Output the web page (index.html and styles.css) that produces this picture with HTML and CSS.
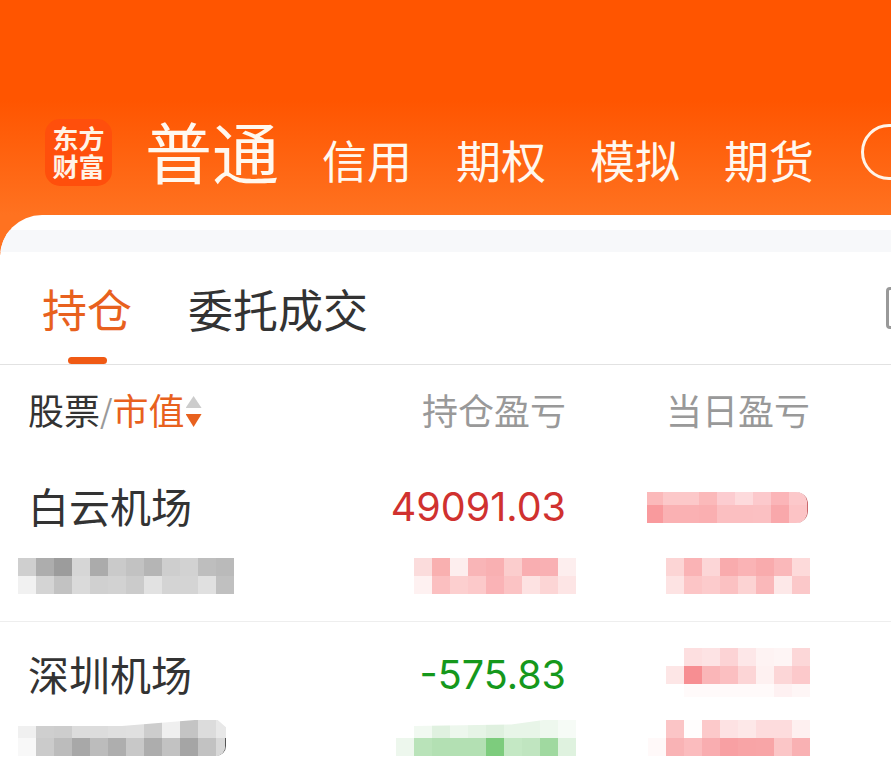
FILE: index.html
```html
<!DOCTYPE html>
<html lang="zh-CN">
<head>
    <meta charset="UTF-8">
    <title>东方财富 持仓</title>
    <link rel="stylesheet" href="styles.css">
</head>
<body>
    <div class="page">
        <header class="top">
            <div class="logo"><span class="logo-text">东方财富</span></div>
            <nav class="accounts">
                <span class="account account-on">普通</span>
                <span class="account">信用</span>
                <span class="account">期权</span>
                <span class="account">模拟</span>
                <span class="account">期货</span>
            </nav>
            <div class="circle-btn"></div>
        </header>

        <main class="card">
            <div class="strip"></div>

            <div class="tabs">
                <div class="tab tab-on">持仓</div>
                <div class="tab">委托成交</div>
                <div class="tab-icon"></div>
            </div>

            <div class="row head">
                <div class="head-name">
                    <span>股票</span><span class="slash">/</span><span class="sorted">市值</span>
                    <span class="sort"><i class="sort-up"></i><i class="sort-down"></i></span>
                </div>
                <div class="head-col col-mid">持仓盈亏</div>
                <div class="head-col">当日盈亏</div>
            </div>

            <div class="row stock first">
                <div class="name">白云机场</div>
                <div class="num red">49091.03</div>
                <div class="mosaic end-round" data-lines="13:fbb9ba fcc8c9 fcc8c9 fbb9ba fcccd0 fddadc fcc9cc fbb5b8 fcc8ca|18:f99a9d fab1b3 fab1b3 faafb1 fbbfc1 fbbfc1 fbc0c2 f9a8ab fcc3c5"></div>
                <div class="mosaic left" data-lines="18:cfcfcf adadad 9c9c9c d6d6d6 ababab cacaca c2c2c2 b5b5b5 cecece d2d2d2 bebebe bababa|18:f1f1f1 d4d4d4 c2c2c2 dadada d0d0d0 d2d2d2 cbcbcb e2e2e2 d4d4d4 d4d4d4 e0e0e0 c0c0c0"></div>
                <div class="mosaic" data-lines="18:fbdcdc f9b0b0 fdeeee f9b5b7 f9b0b2 fbcdcd f9aeb1 f9b0b3 fdeeee|18:fef1f1 fbbfc0 fccfcf fcc9ca fab3b6 fbc3c4 fde2e2 fcd5d5 fde5e5"></div>
                <div class="mosaic" data-lines="18:fcd5d5 fab3b5 fcd6d7 f9abad fab3b5 f9abad fab8ba fddada|18:fde3e3 fcc5c6 fccbcc fbc1c2 fcd3d3 fab8ba fde8e8 fbc8c9"></div>
            </div>

            <div class="row stock second">
                <div class="name name-tight">深圳机场</div>
                <div class="num green">-575.83</div>
                <div class="mosaic lift" data-lines="18:fddfe0 fde3e4 fcd3d5 fde7e8 fef3f3 fef5f5 fcd7d8|18:fde6e6 f78e92 fab6b8 fbbfc1 fcd5d6 fef1f1 fcd6d7 fcc9cb|13:fffafa fffafa fffafa fffafa fffafa fef1f2 fef6f6"></div>
                <div class="mosaic left short" data-lines="18:f0f0f0 cfcfcf cdcdcd dcdcdc dcdcdc dfdfdf e0e0e0 cdcdcd efefef c4c4c4 dcdcdc e8e8e8|18:f8f8f8 cbcbcb bcbcbc a8a8a8 bcbcbc aeaeae c8c8c8 adadad c2c2c2 a5a5a5 c2c2c2 d8d8d8"></div>
                <div class="mosaic rise" data-lines="18:f1f9f1 e0f1e0 edf7ed e6f4e6 dff0df e8f5e8 e8f5e8 eef8ee f6fbf6|18:edf7ed b9e3b9 b3e0b3 b3e0b3 b3e0b3 7dcc7d c4e8c4 c0e5c0 a0d9a0 dff2df"></div>
                <div class="mosaic" data-lines="18:fbc5c6 fffdfd fcc9ca fde2e3 fde8e8 fddcdd fddcdd fef0f0|18:fff9f9 f9b3b5 fbbcbe f9adb0 f8a0a3 f8a4a6 f8a5a7 fbc6c7 f9b1b3"></div>
            </div>
        </main>
    </div>
    <script src="script.js"></script>
</body>
</html>
```

FILE: styles.css
```css
* {
    box-sizing: border-box;
}

html, body {
    margin: 0;
    height: 100%;
    overflow: hidden;
    background: #fff;
}

body {
    font-family: "Noto Sans CJK SC", "Noto Sans", sans-serif;
    color: #333;
}

.page {
    width: 891px;
    height: 784px;
    overflow: hidden;
}

.top {
    position: relative;
    height: 257px;
    padding: 119px 0 0 45px;
    display: flex;
    align-items: flex-start;
    overflow: hidden;
    background: linear-gradient(#ff5500 0, #ff5500 100px, #ff7220 215px);
}

.logo {
    width: 67px;
    height: 67px;
    flex: none;
    padding-top: 5px;
    border-radius: 15px;
    background: #ff4f0c;
    color: #fff3e6;
    font-size: 26px;
    font-weight: 700;
    line-height: 28px;
    text-align: center;
}

.logo-text {
    display: block;
    width: 52px;
    margin: 0 auto;
}

.accounts {
    display: flex;
    align-items: baseline;
    gap: 44px;
    margin: -17px 0 0 33px;
    color: #fff8ef;
    font-size: 45px;
    line-height: 96px;
}

.account-on {
    margin-right: -1px;
    font-size: 67px;
}

.circle-btn {
    position: absolute;
    left: 861px;
    top: 124px;
    width: 56px;
    height: 56px;
    border: 3px solid #fff4e8;
    border-radius: 50%;
}

.card {
    margin-top: -42px;
    height: 569px;
    position: relative;
    background: #fff;
    border-radius: 42px 0 0 0;
    overflow: hidden;
    padding-top: 15px;
}

.strip {
    height: 22px;
    background: #f7f8fa;
}

.tabs {
    position: relative;
    height: 113px;
    padding: 27px 0 0 42px;
    display: flex;
    gap: 56px;
    border-bottom: 1px solid #e2e2e2;
}

.tab {
    font-size: 45px;
    line-height: 60px;
    color: #333;
}

.tab-on {
    position: relative;
    color: #e8611e;
}

.tab-on::after {
    content: "";
    position: absolute;
    left: 26px;
    top: 78px;
    width: 39px;
    height: 7px;
    border-radius: 4px;
    background: #f05a14;
}

.tab-icon {
    position: absolute;
    left: 886px;
    top: 35px;
    width: 30px;
    height: 42px;
    border: 3px solid #999;
    border-radius: 4px;
}

.row {
    display: grid;
    grid-template-columns: 240px 336px 234px;
}

.head {
    height: 100px;
    padding-top: 19px;
    font-size: 36px;
    line-height: 50px;
}

.head-name {
    padding-left: 28px;
    display: flex;
    white-space: nowrap;
}

.slash {
    font-size: 32px;
    color: #999;
}

.sorted {
    color: #e8611e;
}

.sort {
    display: flex;
    flex-direction: column;
    gap: 6px;
    margin: 12px 0 0 1px;
}

.sort i {
    width: 16px;
    height: 12px;
    clip-path: polygon(50% 0, 100% 100%, 0 100%);
    background: #ccc;
}

.sort .sort-down {
    height: 13px;
    clip-path: polygon(0 0, 100% 0, 50% 100%);
    background: #e8611e;
}

.head-col {
    color: #999;
    text-align: right;
}

.col-mid {
    padding-right: 10px;
}

.stock {
    grid-template-rows: 84px auto;
    align-items: center;
}

.first {
    height: 157px;
    border-bottom: 1px solid #eee;
}

.second {
    padding-top: 11px;
}

.name {
    padding: 0 0 5px 28px;
    font-size: 41px;
    color: #333;
}

.name-tight {
    padding-left: 28px;
}

.num {
    padding-right: 10px;
    font-family: Inter, "Noto Sans", sans-serif;
    font-size: 39.5px;
    text-align: right;
}

.red {
    color: #d0312f;
}

.green {
    color: #15981c;
}

.mosaic {
    display: flex;
    flex-direction: column;
    align-items: flex-end;
}

.mosaic.left {
    align-items: flex-start;
    margin-left: 18px;
}

.first .mosaic:nth-child(n+4) {
    margin-top: 9px;
    align-self: start;
}

.second .mosaic:nth-child(n+4) {
    margin-top: 3px;
    align-self: start;
}

.line {
    display: flex;
}

.tile {
    display: block;
    width: 18px;
    flex: none;
}

.end-round {
    margin-right: 2px;
}

.end-round .tile:first-child {
    width: 16px;
}

.end-round .line {
    overflow: hidden;
    border-right: 1px solid #c9686c;
}

.end-round .line:first-child {
    border-top-right-radius: 12px;
}

.end-round .line:last-child {
    border-bottom-right-radius: 12px;
}

.lift {
    margin-bottom: 5px;
}

.short .line {
    width: 208px;
    overflow: hidden;
}

.short .line:last-child {
    border-right: 1px solid #555;
    border-bottom-right-radius: 10px;
}

.short .line:first-child {
    clip-path: polygon(0 33%, 50% 33%, 85% 0, 96% 0, 100% 40%, 100% 100%, 0 100%);
}

.rise .line:first-child {
    clip-path: polygon(0 33%, 60% 25%, 80% 0, 100% 0, 100% 100%, 0 100%);
}
```

FILE: script.js
```js
// turn the data-lines lists into rows of blurred tiles
document.querySelectorAll('.mosaic').forEach(m => {
    m.dataset.lines.split('|').forEach(l => {
        const [h, colors] = l.split(':');
        const line = document.createElement('div');
        line.className = 'line';
        colors.split(' ').forEach(c => {
            const t = document.createElement('span');
            t.className = 'tile';
            t.style.height = h + 'px';
            t.style.background = '#' + c;
            line.appendChild(t);
        });
        m.appendChild(line);
    });
});
```
